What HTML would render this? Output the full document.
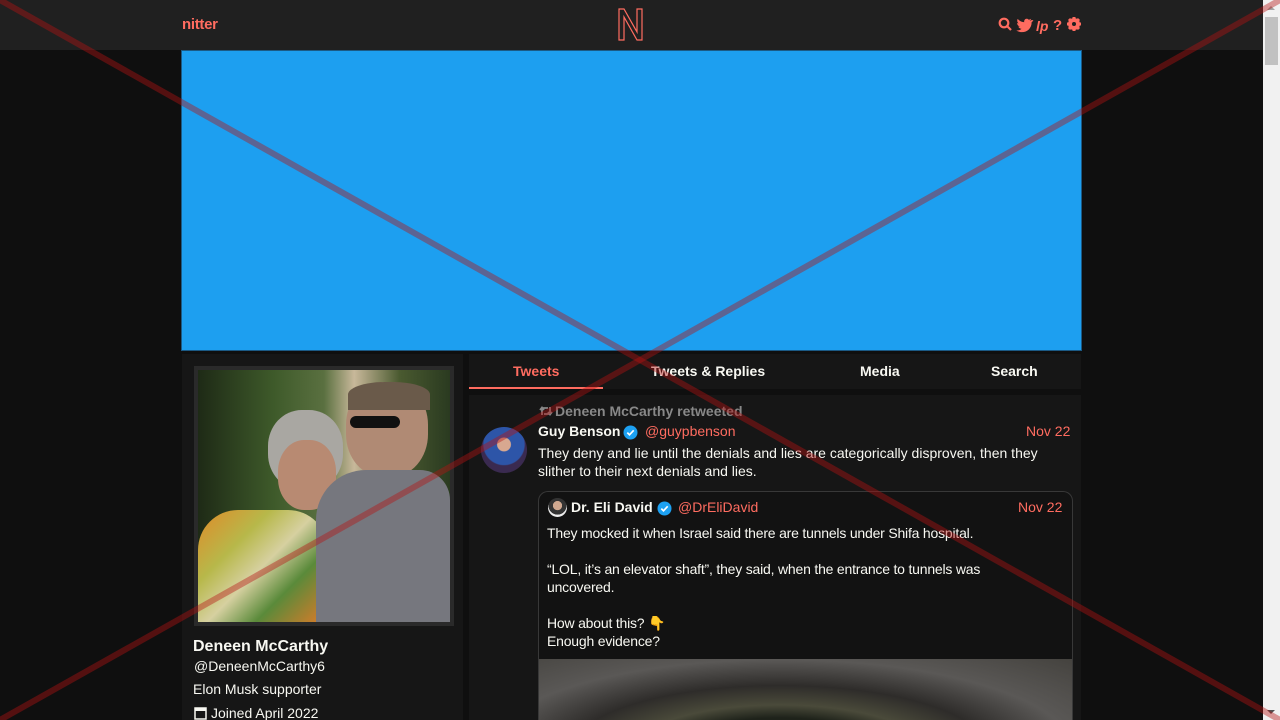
<!DOCTYPE html>
<html style="overflow:hidden;height:720px"><head><meta charset="utf-8"><style>
*{margin:0;padding:0;box-sizing:border-box}
body{width:1280px;height:720px;overflow:hidden;background:#0f0f0f;font-family:"Liberation Sans",Arial,sans-serif;color:#f8f8f2;font-size:14px;position:relative}
.nav{position:absolute;left:0;top:0;width:1263px;height:50px;background:#202020}
.abs{position:absolute}
.t{position:absolute;white-space:nowrap;line-height:18px}
.red{color:#ff6c60}
.b{font-weight:bold}
.sb{position:absolute;right:0;top:0;width:17px;height:720px;background:#f1f1f1}
</style></head><body>
<div class="nav"></div>
<div class="t b red" style="left:182px;top:16px;font-size:15px;letter-spacing:-0.3px">nitter</div>
<svg class="abs" style="left:617px;top:8px" width="28" height="33" viewBox="0 0 28 33"><path d="M2 1h5l13 23V1h5v31h-5L7 9v23H2z" fill="none" stroke="#ff6c60" stroke-width="1.2"/></svg>
<svg class="abs" style="left:998px;top:16px" width="86" height="18" viewBox="0 0 86 18">
<g fill="none" stroke="#ff6c60" stroke-width="2.2"><circle cx="6" cy="7" r="4.3"/><path d="M9 10l4 4"/></g>
<path fill="#ff6c60" d="M34 4c-1 .5-1.6.6-2.4.7.9-.6 1.3-1.2 1.6-2-.8.5-1.6.8-2.5 1-1.6-1.9-5-.8-4.5 2.5-3-.2-5-1.5-6.5-3.3-1 1.7-.3 3.6 1 4.5-.6 0-1.100-.2-1.600-.4 0 1.8 1.2 3 2.8 3.4-.5.2-1.1.2-1.6.1.5 1.4 1.8 2.3 3.2 2.4-1.6 1.3-3.4 1.8-5.2 1.6 7.5 4.5 15.6-.7 15.300-8.300.8-.5 1.300-1.100 1.800-1.800z"/>
<text x="38" y="15" fill="#ff6c60" font-family="Liberation Sans" font-style="italic" font-weight="bold" font-size="14">lp</text>
<text x="55" y="14" fill="#ff6c60" font-family="Liberation Sans" font-weight="bold" font-size="15">?</text>
<g transform="translate(76,8)"><circle r="4.5" fill="none" stroke="#ff6c60" stroke-width="3"/><g stroke="#ff6c60" stroke-width="3"><path d="M0-7V7M-7 0H7M-5-5L5 5M-5 5L5-5"/></g><circle r="2" fill="#202020"/></g>
</svg>
<div class="abs" style="left:181px;top:50px;width:901px;height:301px;background:#1d9ff0;border:1px solid #1b5a85"></div>
<!-- profile card -->
<div class="abs" style="left:182px;top:354px;width:281px;height:366px;background:#161616"></div>
<div class="abs" style="left:194px;top:366px;width:260px;height:260px;background:#2a2a2a;padding:4px">
<div style="width:252px;height:252px;background:linear-gradient(90deg,#1e2a16 0%,#3e5a2a 30%,#5a7040 50%,#c8b89a 62%,#4a5a30 80%,#2a3a20 100%);position:relative;overflow:hidden">
<div class="abs" style="left:70px;top:40px;width:75px;height:80px;border-radius:45%;background:#a9a7a2"></div>
<div class="abs" style="left:80px;top:70px;width:58px;height:70px;border-radius:45%;background:#b88a72"></div>
<div class="abs" style="left:148px;top:12px;width:82px;height:95px;border-radius:45%;background:#b08a74"></div>
<div class="abs" style="left:150px;top:12px;width:82px;height:28px;border-radius:45% 45% 0 0;background:#6a5a4a"></div>
<div class="abs" style="left:152px;top:46px;width:50px;height:12px;border-radius:6px;background:#111"></div>
<div class="abs" style="left:0;top:140px;width:130px;height:112px;border-radius:40px 40px 0 0;background:linear-gradient(135deg,#e08a28,#b7b84a 30%,#d6d0a0 50%,#5a8a3a 70%,#e07a28)"></div>
<div class="abs" style="left:118px;top:100px;width:134px;height:152px;border-radius:50px 30px 0 0;background:#76777e"></div>
</div></div>
<div class="t b" style="left:193px;top:638px;font-size:16px">Deneen McCarthy</div>
<div class="t" style="left:194px;top:657px">@DeneenMcCarthy6</div>
<div class="t" style="left:193px;top:680px">Elon Musk supporter</div>
<svg class="abs" style="left:194px;top:706px" width="13" height="14" viewBox="0 0 13 14"><rect x="1" y="2" width="11" height="11" fill="none" stroke="#f8f8f2" stroke-width="1.5"/><rect x="1" y="2" width="11" height="3" fill="#f8f8f2"/></svg>
<div class="t" style="left:211px;top:704px">Joined April 2022</div>
<!-- tabs -->
<div class="abs" style="left:469px;top:354px;width:612px;height:35px;background:#161616"></div>
<div class="abs" style="left:469px;top:387px;width:134px;height:2px;background:#ff6c60"></div>
<div class="t b red" style="left:513px;top:362px">Tweets</div>
<div class="t b" style="left:651px;top:362px">Tweets &amp; Replies</div>
<div class="t b" style="left:860px;top:362px">Media</div>
<div class="t b" style="left:991px;top:362px">Search</div>
<!-- tweet -->
<div class="abs" style="left:469px;top:395px;width:612px;height:325px;background:#161616"></div>
<svg class="abs" style="left:539px;top:405px" width="14" height="12" viewBox="0 0 14 12"><path d="M3 10V3h6M1 5l2-2.5L5 5M11 2v7H5M13 7l-2 2.5L9 7" fill="none" stroke="#888" stroke-width="1.8"/></svg>
<div class="t b" style="left:555px;top:402px;color:#888">Deneen McCarthy retweeted</div>
<div class="abs" style="left:481px;top:427px;width:46px;height:46px;border-radius:50%;background:radial-gradient(circle at 50% 38%,#d8a890 0 18%,#2d55a8 20% 55%,#3a2a50 58%)"></div>
<div class="t b" style="left:538px;top:422px">Guy Benson</div>
<svg class="abs" style="left:623px;top:425px" width="15" height="15" viewBox="0 0 15 15"><circle cx="7.5" cy="7.5" r="7" fill="#1da1f2"/><path d="M4.3 7.6l2.2 2.2 4.2-4.5" fill="none" stroke="#fff" stroke-width="1.7"/></svg>
<div class="t red" style="left:645px;top:422px">@guypbenson</div>
<div class="t red" style="left:1026px;top:422px">Nov 22</div>
<div class="t" style="left:538px;top:444px">They deny and lie until the denials and lies are categorically disproven, then they</div>
<div class="t" style="left:538px;top:462px">slither to their next denials and lies.</div>
<div class="abs" style="left:538px;top:491px;width:535px;height:229px;border:1px solid #383838;border-bottom:none;border-radius:10px 10px 0 0;background:#121212;overflow:hidden">
<div class="abs" style="left:0;top:167px;width:535px;height:70px;background:radial-gradient(ellipse at 45% 130%,#1e221a 0 25%,#4a4a3a 35%,#2e2c2a 50%,#5a5856 70%,#44423e 100%)"></div>
</div>
<div class="abs" style="left:548px;top:498px;width:19px;height:19px;border-radius:50%;background:radial-gradient(circle at 50% 40%,#d0a890 0 30%,#333 32% 60%,#eee 62%)"></div>
<div class="t b" style="left:571px;top:498px">Dr. Eli David</div>
<svg class="abs" style="left:657px;top:501px" width="15" height="15" viewBox="0 0 15 15"><circle cx="7.5" cy="7.5" r="7" fill="#1da1f2"/><path d="M4.3 7.6l2.2 2.2 4.2-4.5" fill="none" stroke="#fff" stroke-width="1.7"/></svg>
<div class="t red" style="left:678px;top:498px">@DrEliDavid</div>
<div class="t red" style="left:1018px;top:498px">Nov 22</div>
<div class="t" style="left:547px;top:524px;letter-spacing:-0.2px">They mocked it when Israel said there are tunnels under Shifa hospital.</div>
<div class="t" style="left:547px;top:560px;letter-spacing:-0.2px">“LOL, it’s an elevator shaft”, they said, when the entrance to tunnels was</div>
<div class="t" style="left:547px;top:578px;letter-spacing:-0.2px">uncovered.</div>
<div class="t" style="left:547px;top:614px;letter-spacing:-0.2px">How about this? <span style="color:#f2b530">👇</span></div>
<div class="t" style="left:547px;top:632px;letter-spacing:-0.2px">Enough evidence?</div>
<!-- scrollbar -->
<div class="sb"><div class="abs" style="left:2px;top:17px;width:13px;height:48px;background:#c1c1c1"></div>
<div class="abs" style="left:4px;top:6px;width:0;height:0;border-left:4px solid transparent;border-right:4px solid transparent;border-bottom:4px solid #a3a3a3"></div>
<div class="abs" style="left:4px;top:710px;width:0;height:0;border-left:4px solid transparent;border-right:4px solid transparent;border-top:4px solid #505050"></div></div>
<!-- overlay X -->
<svg class="abs" style="left:0;top:0" width="1280" height="720"><g stroke="rgba(180,20,20,0.42)" stroke-width="6"><line x1="0" y1="0" x2="1280" y2="720"/><line x1="0" y1="720" x2="1280" y2="0"/></g></svg>
</body></html>
